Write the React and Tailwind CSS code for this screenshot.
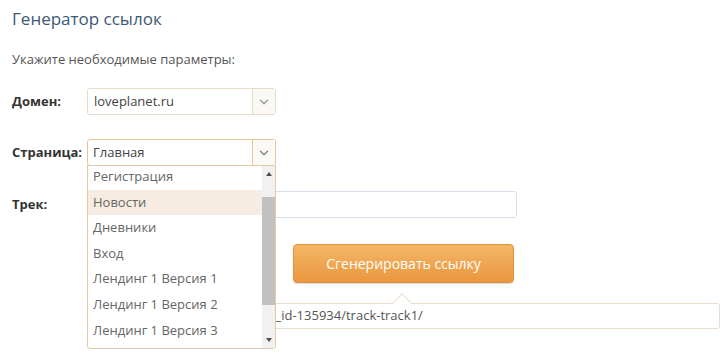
import { ChevronDown } from 'lucide-react';

const pages = [
    'Регистрация',
    'Новости',
    'Дневники',
    'Вход',
    'Лендинг 1 Версия 1',
    'Лендинг 1 Версия 2',
    'Лендинг 1 Версия 3',
];

export default function App() {
    return (
        <div className="w-[725px] h-[361px] overflow-hidden bg-white text-[#555] text-[13px]" style={{ fontFamily: '"Open Sans", "Noto Sans", sans-serif' }}>
            <div className="pl-3 pt-[7px]">
                <h1 className="text-[17px] leading-6 text-[#3b5876]">Генератор ссылок</h1>
                <p className="mt-[18px] leading-5 text-[#555]">Укажите необходимые параметры:</p>

                {/* Domain */}
                <div className="mt-[19px] flex items-center h-[27px]">
                    <label className="w-[75px] font-bold text-[#333]">Домен:</label>
                    <div className="w-[189px] h-[27px] flex border border-[#e7dccd] rounded-[3px] bg-white">
                        <div className="flex-1 px-[6px] flex items-center text-[#444]">loveplanet.ru</div>
                        <div className="w-[23px] border-l border-[#e7dccd] flex items-center justify-center bg-[#fbf9f6]">
                            <ChevronDown size={14} strokeWidth={2.5} className="text-[#999]" />
                        </div>
                    </div>
                </div>

                {/* Page */}
                <div className="mt-6 flex items-center h-[27px] relative">
                    <label className="w-[75px] font-bold text-[#333]">Страница:</label>
                    <div className="w-[189px] h-[27px] flex border border-[#e8c596] rounded-[3px] bg-white">
                        <div className="flex-1 px-[5px] flex items-center text-[#444]">Главная</div>
                        <div className="w-[23px] border-l border-[#e8c596] flex items-center justify-center bg-[#fbf9f6]">
                            <ChevronDown size={14} strokeWidth={2.5} className="text-[#888]" />
                        </div>
                    </div>

                    {/* Dropdown list */}
                    <div className="absolute left-[75px] top-[26px] w-[189px] h-[184px] z-10 bg-white border border-[#e2c9a6] rounded-b-[3px] flex overflow-hidden">
                        <ul className="flex-1 -mt-[2px]">
                            {pages.map((p, i) => (
                                <li
                                    key={p}
                                    className={`h-[25.6px] flex items-center px-[5px] text-[#666] ${i === 1 ? 'bg-[#f6ece1]' : ''}`}
                                >
                                    {p}
                                </li>
                            ))}
                        </ul>
                        <div className="w-[13px] bg-[#f1f1f1] flex flex-col items-center">
                            <div className="h-[16px] flex items-center justify-center">
                                <div className="w-0 h-0 border-x-[3.5px] border-x-transparent border-b-[4px] border-b-[#505050]" />
                            </div>
                            <div className="w-[13px] h-[108px] mt-[15px] bg-[#c1c1c1]" />
                            <div className="flex-1" />
                            <div className="h-[16px] flex items-center justify-center">
                                <div className="w-0 h-0 border-x-[3.5px] border-x-transparent border-t-[4px] border-t-[#505050]" />
                            </div>
                        </div>
                    </div>
                </div>

                {/* Track */}
                <div className="mt-[25px] flex items-center h-[27px]">
                    <label className="w-[75px] font-bold text-[#333]">Трек:</label>
                    <div className="w-[430px] h-[27px] border border-[#d7e0ea] rounded-[3px] bg-white" />
                </div>

                {/* Button */}
                <div className="mt-[26px] pl-[281px]">
                    <button className="w-[221px] h-[39px] rounded-[4px] border border-[#e0913e] bg-gradient-to-b from-[#f3b766] to-[#ea963d] text-white text-[14px] shadow-[0_1px_1px_rgba(0,0,0,0.15)]">
                        Сгенерировать ссылку
                    </button>
                </div>

                {/* Result */}
                <div className="mt-[20px] ml-[75px] relative">
                    <div className="absolute left-[308px] -top-[7px] w-[14px] h-[14px] rotate-45 bg-white border-l border-t border-[#e8ddd0]" />
                    <div className="w-[633px] h-[26px] border border-[#e8ddd0] rounded-[3px] bg-white flex items-center pl-[10px] pr-[8px] text-[#555] whitespace-nowrap overflow-hidden">
                        http://loveplanet.ru/a-main/p_id-135934/track-track1/
                    </div>
                </div>
            </div>
        </div>
    );
}
